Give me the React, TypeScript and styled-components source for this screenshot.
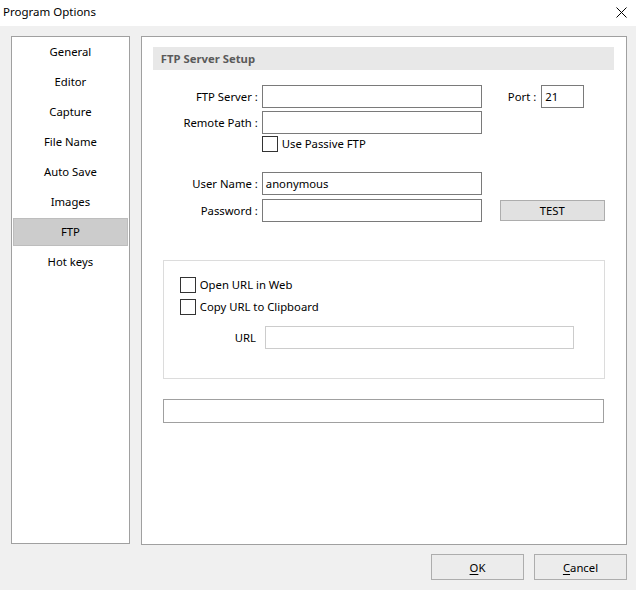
import React from "react";
import styled, { createGlobalStyle } from "styled-components";

const Global = createGlobalStyle`
  html, body { margin: 0; padding: 0; }
  body { font-family: "Noto Sans", "Open Sans", sans-serif; font-size: 11.3px; line-height: 16px; color: #000; }
`;

const Window = styled.div`
  width: 636px;
  height: 590px;
  background: #f0f0f0;
  display: flex;
  flex-direction: column;
  overflow: hidden;
`;

const TitleBar = styled.div`
  height: 26px;
  background: #fff;
  display: flex;
  align-items: center;
  justify-content: space-between;
  padding: 0 9px 2px 3px;
  box-sizing: border-box;
`;

const Title = styled.span`
  font-size: 11.5px;
`;

const Body = styled.div`
  display: flex;
  gap: 11px;
  padding: 10px 9px 0 11px;
`;

const NavList = styled.div`
  width: 119px;
  height: 508px;
  box-sizing: border-box;
  background: #fff;
  border: 1px solid #a0a0a0;
  display: flex;
  flex-direction: column;
`;

const NavItem = styled.div<{ $active?: boolean }>`
  height: 28px;
  margin: 1px;
  box-sizing: border-box;
  display: flex;
  align-items: center;
  justify-content: center;
  padding-bottom: 1px;
  background: ${(p) => (p.$active ? "#cccccc" : "transparent")};
  border: 1px solid ${(p) => (p.$active ? "#bdbdbd" : "transparent")};
`;

const Panel = styled.div`
  width: 487px;
  height: 509px;
  box-sizing: border-box;
  background: #fff;
  border: 1px solid #a0a0a0;
  padding: 10px 12px 0 11px;
  display: flex;
  flex-direction: column;
`;

const SectionHeader = styled.div`
  height: 23px;
  background: #e8e8e8;
  display: flex;
  align-items: center;
  padding-left: 8px;
  font-weight: bold;
  color: #5a5a5a;
`;

const FormGrid = styled.div`
  display: grid;
  grid-template-columns: 116px 220px 1fr;
  column-gap: 4px;
  margin: 15px 0 0 -11px;
  align-items: center;
`;

const Label = styled.label<{ $mt?: number }>`
  justify-self: end;
  white-space: nowrap;
  margin-top: ${(p) => p.$mt ?? 0}px;
`;

const TextInput = styled.div<{ $w?: number; $light?: boolean }>`
  width: ${(p) => (p.$w ? `${p.$w}px` : "100%")};
  height: 23px;
  box-sizing: border-box;
  border: 1px solid ${(p) => (p.$light ? "#cccccc" : "#7a7a7a")};
  background: #fff;
  display: flex;
  align-items: center;
  padding-left: 3px;
`;

const Row = styled.div`
  display: contents;
`;

const Cell = styled.div<{ $mt?: number }>`
  margin-top: ${(p) => p.$mt ?? 0}px;
  display: flex;
  align-items: center;
`;

const PortCell = styled(Cell)`
  padding-left: 22px;
  gap: 5px;
`;

const CheckRow = styled.div`
  display: flex;
  align-items: center;
  gap: 4px;
  height: 16px;
`;

const Box = styled.span`
  width: 16px;
  height: 16px;
  box-sizing: border-box;
  border: 1px solid #333;
  background: #fff;
  flex: none;
`;

const Button = styled.button<{ $w: number; $h: number; $bg?: string }>`
  width: ${(p) => p.$w}px;
  height: ${(p) => p.$h}px;
  box-sizing: border-box;
  border: 1px solid #adadad;
  background: ${(p) => p.$bg ?? "#e1e1e1"};
  font-family: inherit;
  font-size: 11.3px;
  color: #000;
  padding: 0;
  display: flex;
  align-items: center;
  justify-content: center;
`;

const GroupBox = styled.div`
  margin: 38px 0 0 10px;
  width: 442px;
  height: 119px;
  box-sizing: border-box;
  border: 1px solid #dcdcdc;
  padding: 16px 0 0 16px;
  display: flex;
  flex-direction: column;
  gap: 6px;
`;

const UrlRow = styled.div`
  display: flex;
  align-items: center;
  margin: 5px 0 0 55px;
  gap: 9px;
`;

const StatusBox = styled.div`
  margin: 20px 0 0 10px;
  width: 441px;
  height: 24px;
  box-sizing: border-box;
  border: 1px solid #a0a0a0;
  background: #fff;
`;

const Footer = styled.div`
  display: flex;
  justify-content: flex-end;
  gap: 10px;
  padding: 9px 9px 0 0;
`;

const Mnemonic = styled.u`
  text-decoration: underline;
  text-underline-offset: 2px;
`;

const items = ["General", "Editor", "Capture", "File Name", "Auto Save", "Images", "FTP", "Hot keys"];

export default function App() {
  return (
    <Window>
      <Global />
      <TitleBar>
        <Title>Program Options</Title>
        <svg width="11" height="11" viewBox="0 0 11 11">
          <path d="M0.5 0.5 L10.5 10.5 M10.5 0.5 L0.5 10.5" stroke="#000" strokeWidth="1" />
        </svg>
      </TitleBar>
      <Body>
        <NavList>
          {items.map((it) => (
            <NavItem key={it} $active={it === "FTP"}>
              {it}
            </NavItem>
          ))}
        </NavList>
        <Panel>
          <SectionHeader>FTP Server Setup</SectionHeader>
          <FormGrid>
            <Row>
              <Label>FTP Server :</Label>
              <TextInput />
              <PortCell>
                Port :<TextInput $w={43}>21</TextInput>
              </PortCell>
            </Row>
            <Row>
              <Label $mt={3}>Remote Path :</Label>
              <Cell $mt={3}>
                <TextInput />
              </Cell>
              <span />
            </Row>
            <Row>
              <span />
              <Cell $mt={2}>
                <CheckRow>
                  <Box />
                  Use Passive FTP
                </CheckRow>
              </Cell>
              <span />
            </Row>
            <Row>
              <Label $mt={20}>User Name :</Label>
              <Cell $mt={20}>
                <TextInput>anonymous</TextInput>
              </Cell>
              <span />
            </Row>
            <Row>
              <Label $mt={4}>Password :</Label>
              <Cell $mt={4}>
                <TextInput />
              </Cell>
              <Cell $mt={4}>
                <Button $w={105} $h={21} style={{ marginLeft: 14 }}>
                  TEST
                </Button>
              </Cell>
            </Row>
          </FormGrid>
          <GroupBox>
            <CheckRow>
              <Box />
              Open URL in Web
            </CheckRow>
            <CheckRow>
              <Box />
              Copy URL to Clipboard
            </CheckRow>
            <UrlRow>
              URL
              <TextInput $w={309} $light />
            </UrlRow>
          </GroupBox>
          <StatusBox />
        </Panel>
      </Body>
      <Footer>
        <Button $w={93} $h={26} $bg="#ececec">
          <span>
            <Mnemonic>O</Mnemonic>K
          </span>
        </Button>
        <Button $w={93} $h={26} $bg="#ececec">
          <span>
            <Mnemonic>C</Mnemonic>ancel
          </span>
        </Button>
      </Footer>
    </Window>
  );
}
